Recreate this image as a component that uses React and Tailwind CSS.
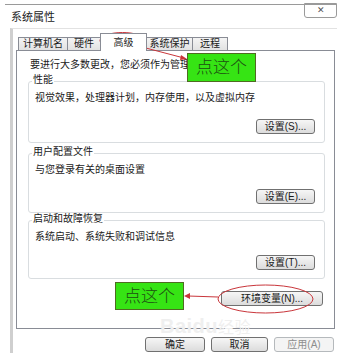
import React from 'react';

const FONT = { fontFamily: '"Liberation Sans", "Noto Sans CJK SC", sans-serif' };

function WinButton({ children, className = '', disabled = false }) {
  return (
    <div
      className={`h-[15px] flex items-center justify-center rounded-[3px] border text-[10px] leading-none ${
        disabled
          ? 'border-[#b5b9bc] bg-[#f4f4f4] text-[#8d8d8d]'
          : 'border-[#707070] bg-gradient-to-b from-[#f6f6f6] to-[#dcdcdc] text-[#1a1a1a]'
      } ${className}`}
    >
      {children}
    </div>
  );
}

function Group({ title, text, button, className = '' }) {
  return (
    <div className={`relative border border-[#d9dde0] rounded-[3px] flex flex-col justify-between pl-[6px] pr-[9px] pt-[9px] pb-[8px] ${className}`}>
      <span className="absolute -top-[8px] left-[3px] bg-white px-[1px] text-[10px] leading-[12px] text-[#1a1a1a]">
        {title}
      </span>
      <div className="text-[10px] leading-[14px] text-[#1a1a1a]">{text}</div>
      <div className="flex justify-end">
        <WinButton className="w-[59px]">{button}</WinButton>
      </div>
    </div>
  );
}

const TABS = [
  { name: '计算机名', w: 'w-[50px]' },
  { name: '硬件', w: 'w-[34px]' },
  { name: '高级', w: 'w-[47px]', active: true },
  { name: '系统保护', w: 'w-[47px]' },
  { name: '远程', w: 'w-[36px]' },
];

export default function App() {
  return (
    <div className="relative w-[343px] h-[360px] bg-white overflow-hidden" style={FONT}>
      {/* Title bar */}
      <div className="mt-[4px] ml-[5px] w-[332px] h-[24px] border-t border-[#9a9a9a] flex justify-between">
        <div className="self-center pl-[6px] text-[11px] leading-[12px] text-[#222]">系统属性</div>
        <div className="-mt-[2px] w-[33px] h-[15px] border border-[#9a9a9a] rounded-b-[3px] flex items-center justify-center text-[9px] leading-none text-[#555]">
          ✕
        </div>
      </div>

      {/* Body */}
      <div className="ml-[10px] w-[327px] h-[325px] border-l-[3px] border-t border-l-[#cfcfcf] border-t-[#e2e2e2] pt-[4px]">
        {/* Tabs */}
        <div className="ml-[5px] flex items-end h-[17px]">
          {TABS.map((t) => (
            <div
              key={t.name}
              className={`${t.w} -ml-[1px] first:ml-0 border border-b-0 border-[#898c95] flex items-center justify-center text-[10px] leading-none text-[#1a1a1a] ${
                t.active
                  ? 'relative z-10 h-[18px] -mb-[1px] bg-white'
                  : 'h-[13px] bg-gradient-to-b from-[#f4f4f4] to-[#e2e2e2]'
              }`}
            >
              {t.name}
            </div>
          ))}
        </div>

        {/* Tab panel */}
        <div className="ml-[3px] w-[319px] h-[279px] border border-[#898c95] bg-white pl-[11px] pr-[9px] pt-[7px] flex flex-col">
          <div className="pl-[2px] text-[10px] leading-[14px] text-[#1a1a1a] whitespace-nowrap">
            要进行大多数更改，您必须作为管理员登录。
          </div>

          <Group
            className="mt-[9px] h-[62px]"
            title="性能"
            text="视觉效果，处理器计划，内存使用，以及虚拟内存"
            button="设置(S)..."
          />
          <Group
            className="mt-[10px] h-[60px]"
            title="用户配置文件"
            text="与您登录有关的桌面设置"
            button="设置(E)..."
          />
          <Group
            className="mt-[7px] h-[59px]"
            title="启动和故障恢复"
            text="系统启动、系统失败和调试信息"
            button="设置(T)..."
          />

          <div className="mt-[12px] flex justify-end pr-[2px]">
            <WinButton className="w-[102px]">环境变量(N)...</WinButton>
          </div>
        </div>

        {/* Dialog buttons */}
        <div className="mt-[8px] flex justify-end gap-[6px] pr-[3px]">
          <WinButton className="w-[60px]">确定</WinButton>
          <WinButton className="w-[57px]">取消</WinButton>
          <WinButton className="w-[60px]" disabled>应用(A)</WinButton>
        </div>
      </div>

      {/* Baidu watermark */}
      <div className="absolute left-[160px] top-[316px] text-[20px] leading-none font-bold tracking-wide text-[#efefef] pointer-events-none">
        Baidu<span className="text-[16px] font-normal">经验</span>
      </div>

      {/* Green annotation boxes */}
      <div className="absolute left-[187px] top-[53px] w-[69px] h-[29px] bg-[#36e414] border border-[#4f6b22] flex items-center justify-center text-[17px] leading-none font-light text-[#1d4d12]">
        点这个
      </div>
      <div className="absolute left-[115px] top-[282px] w-[69px] h-[28px] bg-[#36e414] border border-[#4f6b22] flex items-center justify-center text-[17px] leading-none font-light text-[#1d4d12]">
        点这个
      </div>

      {/* Red ellipses and arrows */}
      <svg className="absolute inset-0 pointer-events-none" width="343" height="360" viewBox="0 0 343 360">
        <ellipse cx="122.5" cy="40.5" rx="22.5" ry="8" fill="none" stroke="#c9363b" strokeWidth="1" />
        <line x1="142" y1="47" x2="184" y2="58" stroke="#c9363b" strokeWidth="1" />
        <polygon points="187,59 181,55 180,60" fill="#c9363b" />
        <ellipse cx="265.5" cy="299" rx="47.5" ry="14" fill="none" stroke="#c9363b" strokeWidth="1" />
        <line x1="218" y1="297" x2="188" y2="296" stroke="#c9363b" strokeWidth="1" />
        <polygon points="184,296 190,293 190,299" fill="#c9363b" />
      </svg>
    </div>
  );
}
